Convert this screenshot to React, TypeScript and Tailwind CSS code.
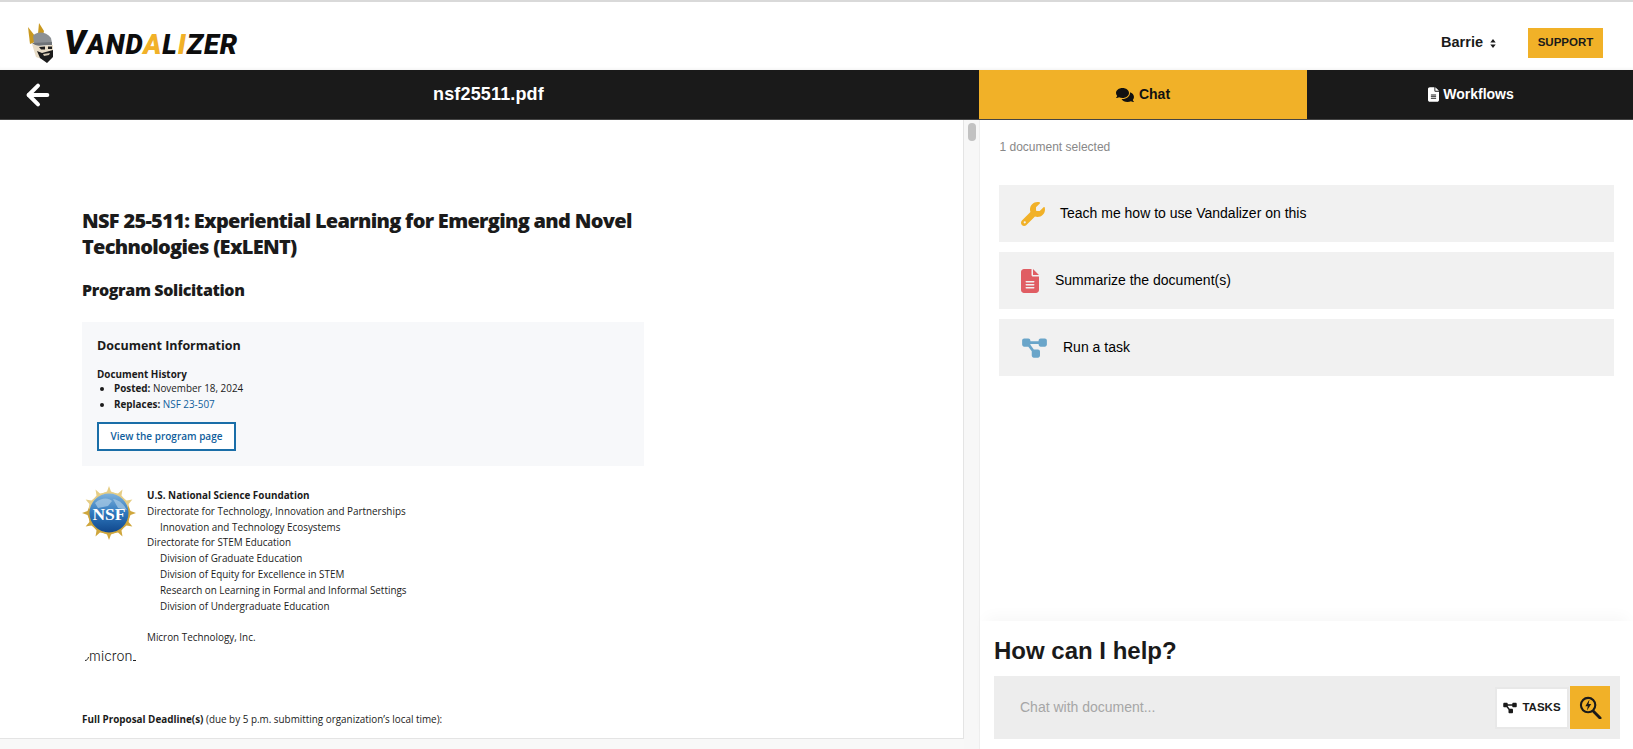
import { ArrowLeft } from "lucide-react";
import { FaComments } from "react-icons/fa";
import { FaDiagramProject, FaFileLines, FaWrench } from "react-icons/fa6";

const NSF_LINES = [
  { text: "Directorate for Technology, Innovation and Partnerships", indent: false },
  { text: "Innovation and Technology Ecosystems", indent: true },
  { text: "Directorate for STEM Education", indent: false },
  { text: "Division of Graduate Education", indent: true },
  { text: "Division of Equity for Excellence in STEM", indent: true },
  { text: "Research on Learning in Formal and Informal Settings", indent: true },
  { text: "Division of Undergraduate Education", indent: true },
];

// Viking mascot next to the wordmark
function VikingHead() {
  return (
    <svg viewBox="0 0 26 40" className="h-[40px] w-[26px] shrink-0">
      <path d="M1 4 L8 13 L8 19 L3 21 Z" fill="#c9981f" />
      <path d="M12 0 L17 8 L16 12 L11 11 Z" fill="#c9981f" />
      <path d="M6 13 C9 8 19 8 24 15 L25 20 L7 20 Z" fill="#8c9094" />
      <path d="M5 20 L25 19 L25 22 L9 23 Z" fill="#6f7377" />
      <path d="M5 21 L9 34 L20 38 L26 30 L26 22 L12 23 Z" fill="#e8dcc6" />
      <path d="M10 28 L15 30 L26 27 L26 34 L20 40 L13 35 Z" fill="#1c1c1c" />
      <path d="M12 24 L18 23.5 L18 26.5 L14 26.5 Z" fill="#1c1c1c" />
      <path d="M21 23.5 L25 23.5 L25 26 L21 26 Z" fill="#1c1c1c" />
      <path d="M16 31 L23 30 L22 32 L17 33 Z" fill="#d8ccb6" />
    </svg>
  );
}

function NsfLogo() {
  const stars = Array.from({ length: 12 }, (_, i) => (i * 360) / 12);
  return (
    <svg viewBox="0 0 54 54" className="h-[54px] w-[54px]">
      <defs>
        <linearGradient id="globe" x1="0" y1="0" x2="0" y2="1">
          <stop offset="0%" stopColor="#7fb2dc" />
          <stop offset="50%" stopColor="#2f78bd" />
          <stop offset="100%" stopColor="#10478c" />
        </linearGradient>
      </defs>
      {stars.map((deg) => (
        <path
          key={deg}
          d="M27 0 L29 5.5 L34 7.5 L29.5 9.5 L27 15 L24.5 9.5 L20 7.5 L25 5.5 Z"
          fill={deg > 80 && deg < 280 ? "#cfa63c" : "#e6cd85"}
          transform={`rotate(${deg} 27 27)`}
        />
      ))}
      <circle cx="27" cy="27" r="19.5" fill="url(#globe)" />
      <path d="M13 17 C20 11 27 12 30 15 L26 20 L16 22 Z" fill="#a6c8e4" opacity="0.75" />
      <path d="M31 13 C38 14 42 19 45 24 L36 22 Z" fill="#a6c8e4" opacity="0.75" />
      <text
        x="27"
        y="33.5"
        textAnchor="middle"
        fontSize="17.5"
        fontWeight="700"
        fill="#ffffff"
        fontFamily="'Liberation Serif', serif"
      >
        NSF
      </text>
    </svg>
  );
}

function SearchBolt() {
  return (
    <svg viewBox="0 0 24 24" className="h-[23px] w-[23px]" fill="none" stroke="#1a1a1a">
      <circle cx="9.5" cy="9.5" r="7.5" strokeWidth="2.2" />
      <path
        d="M11 3.5 L6.6 10.6 L9.2 10.6 L8.2 15.5 L12.8 8.4 L10 8.4 Z"
        fill="#1a1a1a"
        stroke="#f1b128"
        strokeWidth="1.2"
        paintOrder="stroke"
      />
      <path d="M15 16 L22 23" strokeWidth="3" strokeLinecap="round" />
    </svg>
  );
}

function ActionRow({ icon, label, gap }: { icon: React.ReactNode; label: string; gap: string }) {
  return (
    <div className={`flex h-[57px] items-center bg-[#f1f1f1] pl-[22px] text-[14px] text-black ${gap}`}>
      {icon}
      <span>{label}</span>
    </div>
  );
}

export default function App() {
  return (
    <div className="flex h-screen flex-col overflow-hidden bg-white font-['Liberation_Sans',sans-serif]">
      <div className="h-[2px] shrink-0 bg-[#d9d9d9]" />

      {/* top header */}
      <header className="relative flex h-[68px] shrink-0 items-center justify-between pl-[27px] pr-[30px] pt-[14px] shadow-[inset_0_-3px_3px_-2px_rgba(0,0,0,0.06)]">
        <div className="flex items-center gap-[11px]">
          <VikingHead />
          <span className="mt-[-2px] font-['Roboto',sans-serif] text-[27.5px] font-black italic leading-none tracking-[0.9px] text-[#0d0d0d]">
            <span className="text-[34px]">V</span>AND<span className="text-[#f1b128]">A</span>L
            <span className="text-[#f1b128]">I</span>ZER
          </span>
        </div>
        <div className="flex items-center">
          <span className="text-[14.5px] font-bold text-[#1a1a1a]">Barrie</span>
          <svg viewBox="0 0 6 10" className="ml-[7px] h-[9px] w-[6px]" fill="#1a1a1a">
            <path d="M3 0 L6 4 L0 4 Z M3 10 L0 6 L6 6 Z" />
          </svg>
          <button className="ml-[32px] h-[30px] w-[75px] bg-[#f1b128] text-[11.5px] font-bold text-[#1a1a1a]">
            SUPPORT
          </button>
        </div>
      </header>

      {/* black title / tab bar */}
      <div className="flex h-[50px] shrink-0 border-b border-[#444444] bg-[#1a1a1a] text-white">
        <div className="flex w-[979px] items-center">
          <ArrowLeft size={32} strokeWidth={3} className="ml-[22px] shrink-0" />
          <div className="flex-1 pr-[56px] text-center text-[18px] font-bold tracking-[0.15px]">nsf25511.pdf</div>
        </div>
        <div className="flex w-[328px] items-center justify-center gap-[5px] bg-[#f1b128] text-[14px] font-bold text-[#111111]">
          <FaComments size={18} />
          <span>Chat</span>
        </div>
        <div className="flex flex-1 items-center justify-center gap-[4px] pl-[2px] text-[14px] font-bold">
          <FaFileLines className="h-[15px] w-[11px]" />
          <span>Workflows</span>
        </div>
      </div>

      <div className="flex min-h-0 flex-1">
        {/* document pane */}
        <div className="flex w-[979px] shrink-0">
          <div className="flex w-[964px] shrink-0 flex-col bg-[#f8f8f8]">
            <div className="min-h-0 flex-1 overflow-hidden border-b border-r border-[#e4e4e4] bg-white pl-[82px] pt-[88px] font-['Open_Sans',sans-serif] text-[#1b1b1b]">
              <h1 className="w-[570px] text-[20px] font-extrabold leading-[26px] tracking-[-0.7px]">
                NSF 25-511: Experiential Learning for Emerging and Novel Technologies (ExLENT)
              </h1>
              <h2 className="mt-[18px] text-[16px] font-extrabold leading-[24px] tracking-[-0.35px]">Program Solicitation</h2>

              <div className="mt-[20px] h-[144px] w-[562px] bg-[#f7f8fa] pl-[15px] pt-[14px]">
                <h3 className="text-[12.5px] font-bold leading-[20px]">Document Information</h3>
                <div className="mt-[11px] text-[9.9px] font-bold leading-[14px]">Document History</div>
                <ul className="list-disc pl-[17px] text-[9.9px] leading-[15.5px]">
                  <li>
                    <b>Posted:</b> November 18, 2024
                  </li>
                  <li>
                    <b>Replaces:</b> <span className="text-[#0f5e9c]">NSF 23-507</span>
                  </li>
                </ul>
                <button className="mt-[10px] h-[29px] w-[139px] border-2 border-[#1a6ea8] bg-white text-[10px] font-semibold text-[#0f5e9c]">
                  View the program page
                </button>
              </div>

              <div className="mt-[22px] flex text-[9.9px] leading-[15.8px]">
                <div className="w-[65px] shrink-0">
                  <div className="mt-[-2px]">
                    <NsfLogo />
                  </div>
                  <div className="ml-[3px] mt-[109px] flex items-end text-[#222222]">
                    <svg viewBox="0 0 4 4" className="mb-[2px] h-[4px] w-[4px]" fill="none" stroke="#222222">
                      <path d="M0 3.5 C2 3.5 3 2 3.5 0" />
                    </svg>
                    <span className="font-['Inter',sans-serif] text-[13.5px] font-light leading-[14px] tracking-[0.1px]">
                      micron
                    </span>
                    <svg viewBox="0 0 3 2" className="mb-[2px] h-[2px] w-[3px]" fill="none" stroke="#222222">
                      <path d="M0 1.5 L3 1.5" />
                    </svg>
                  </div>
                </div>
                <div>
                  <div className="font-bold">U.S. National Science Foundation</div>
                  {NSF_LINES.map((line) => (
                    <div key={line.text} className={line.indent ? "pl-[13px]" : ""}>
                      {line.text}
                    </div>
                  ))}
                  <div className="mt-[15.8px]">Micron Technology, Inc.</div>
                </div>
              </div>

              <p className="mt-[49px] text-[9.9px] leading-[15px]">
                <b>Full Proposal Deadline(s)</b> (due by 5 p.m. submitting organization’s local time):
              </p>
            </div>
            <div className="h-[10px] shrink-0" />
          </div>

          {/* scrollbar track */}
          <div className="w-[15px] shrink-0 bg-[#f7f7f7] pl-[4px] pt-[3px]">
            <div className="h-[18px] w-[8px] rounded-full bg-[#c2c2c2]" />
          </div>
        </div>

        {/* chat pane */}
        <div className="flex min-w-0 flex-1 flex-col border-l border-[#eeeeee]">
          <div className="flex-1">
            <div className="pl-[19.5px] pt-[19px] text-[12px] leading-[16px] text-[#888888]">1 document selected</div>
            <div className="ml-[19px] mr-[19px] mt-[30px] flex flex-col gap-[10px]">
              <ActionRow icon={<FaWrench size={24} className="text-[#f1b128]" />} label="Teach me how to use Vandalizer on this" gap="gap-[15px]" />
              <ActionRow icon={<FaFileLines className="h-[24px] w-[18px] text-[#e05d63]" />} label="Summarize the document(s)" gap="gap-[16px]" />
              <ActionRow icon={<FaDiagramProject className="h-[22px] w-[27px] text-[#6aa5c9]" />} label="Run a task" gap="gap-[15px]" />
            </div>
          </div>

          <div className="h-[128px] shrink-0 bg-white pl-[14px] pr-[13px] shadow-[0_-10px_14px_-6px_rgba(0,0,0,0.035)]">
            <div className="pt-[15px] text-[24px] font-bold leading-[30px] text-[#1a1a1a]">How can I help?</div>
            <div className="mt-[10px] flex h-[63px] items-center bg-[#ededed] pl-[26px] pr-[10px]">
              <span className="flex-1 text-[14px] text-[#a6a6a6]">Chat with document...</span>
              <button className="flex h-[42px] w-[74px] items-center justify-center gap-[5px] border-2 border-[#e8e8e8] bg-white text-[11.5px] font-bold text-[#1a1a1a]">
                <FaDiagramProject className="h-[12px] w-[14px]" />
                TASKS
              </button>
              <button className="ml-[1px] flex h-[43px] w-[40px] items-center justify-center bg-[#f1b128]">
                <SearchBolt />
              </button>
            </div>
          </div>
        </div>
      </div>
    </div>
  );
}
